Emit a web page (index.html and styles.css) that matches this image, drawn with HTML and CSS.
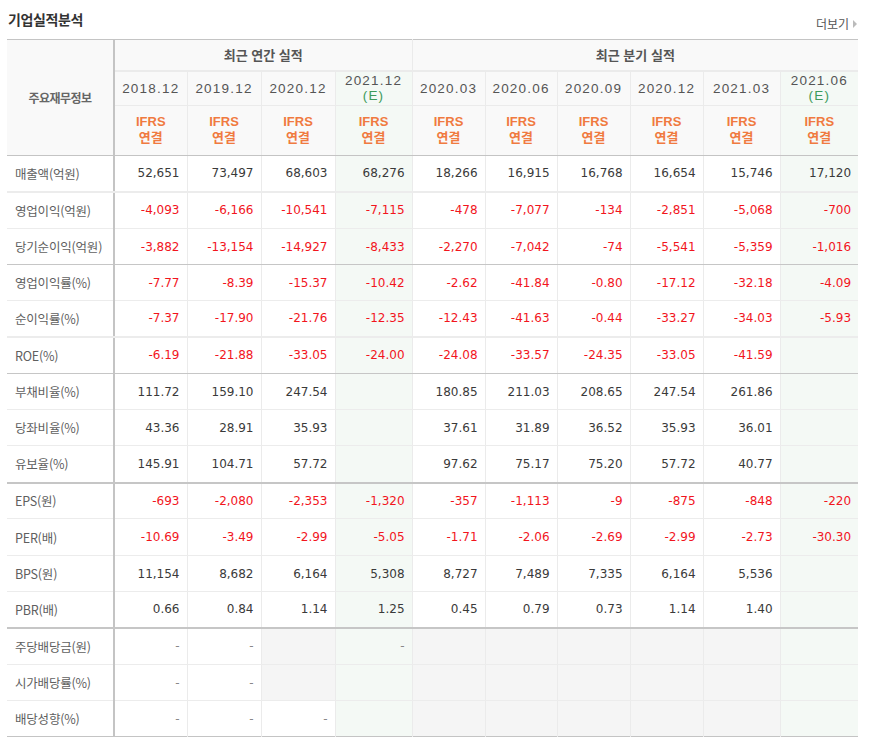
FILE: index.html
```html
<!DOCTYPE html>
<html lang="ko">
<head>
<meta charset="utf-8">
<title>기업실적분석</title>
<link rel="stylesheet" href="styles.css">
</head>
<body>
<div class="wrap">
  <div class="head">
    <h2 class="title">기업실적분석</h2>
    <a class="more" href="#">더보기<span class="arr"></span></a>
  </div>
  <table class="fin">
    <colgroup>
      <col class="c-lab"><col class="c73"><col class="c74"><col class="c74"><col class="c77">
      <col class="c73"><col class="c72"><col class="c73"><col class="c73"><col class="c77"><col class="c78">
    </colgroup>
    <thead>
      <tr class="r-grp">
        <th class="lab-h" rowspan="3">주요재무정보</th>
        <th class="grp" colspan="4">최근 연간 실적</th>
        <th class="grp sep" colspan="6">최근 분기 실적</th>
      </tr>
      <tr class="r-date">
        <th class="date">2018.12</th>
        <th class="date">2019.12</th>
        <th class="date">2020.12</th>
        <th class="date est">2021.12<br><em>(E)</em></th>
        <th class="date sep">2020.03</th>
        <th class="date">2020.06</th>
        <th class="date">2020.09</th>
        <th class="date">2020.12</th>
        <th class="date">2021.03</th>
        <th class="date est">2021.06<br><em>(E)</em></th>
      </tr>
      <tr class="r-ifrs">
        <th class="ifrs">IFRS<br>연결</th>
        <th class="ifrs">IFRS<br>연결</th>
        <th class="ifrs">IFRS<br>연결</th>
        <th class="ifrs est">IFRS<br>연결</th>
        <th class="ifrs sep">IFRS<br>연결</th>
        <th class="ifrs">IFRS<br>연결</th>
        <th class="ifrs">IFRS<br>연결</th>
        <th class="ifrs">IFRS<br>연결</th>
        <th class="ifrs">IFRS<br>연결</th>
        <th class="ifrs est">IFRS<br>연결</th>
      </tr>
    </thead>
    <tbody>
      <tr class="lite2">
        <td class="lab">매출액(억원)</td>
        <td class="n">52,651</td><td class="n">73,497</td><td class="n">68,603</td><td class="n est">68,276</td>
        <td class="n sep">18,266</td><td class="n">16,915</td><td class="n">16,768</td><td class="n">16,654</td><td class="n">15,746</td><td class="n est">17,120</td>
      </tr>
      <tr class="tall">
        <td class="lab">영업이익(억원)</td>
        <td class="n neg">-4,093</td><td class="n neg">-6,166</td><td class="n neg">-10,541</td><td class="n neg est">-7,115</td>
        <td class="n neg sep">-478</td><td class="n neg">-7,077</td><td class="n neg">-134</td><td class="n neg">-2,851</td><td class="n neg">-5,068</td><td class="n neg est">-700</td>
      </tr>
      <tr class="end">
        <td class="lab">당기순이익(억원)</td>
        <td class="n neg">-3,882</td><td class="n neg">-13,154</td><td class="n neg">-14,927</td><td class="n neg est">-8,433</td>
        <td class="n neg sep">-2,270</td><td class="n neg">-7,042</td><td class="n neg">-74</td><td class="n neg">-5,541</td><td class="n neg">-5,359</td><td class="n neg est">-1,016</td>
      </tr>
      <tr>
        <td class="lab">영업이익률(%)</td>
        <td class="n neg">-7.77</td><td class="n neg">-8.39</td><td class="n neg">-15.37</td><td class="n neg est">-10.42</td>
        <td class="n neg sep">-2.62</td><td class="n neg">-41.84</td><td class="n neg">-0.80</td><td class="n neg">-17.12</td><td class="n neg">-32.18</td><td class="n neg est">-4.09</td>
      </tr>
      <tr class="lite2">
        <td class="lab">순이익률(%)</td>
        <td class="n neg">-7.37</td><td class="n neg">-17.90</td><td class="n neg">-21.76</td><td class="n neg est">-12.35</td>
        <td class="n neg sep">-12.43</td><td class="n neg">-41.63</td><td class="n neg">-0.44</td><td class="n neg">-33.27</td><td class="n neg">-34.03</td><td class="n neg est">-5.93</td>
      </tr>
      <tr class="end tall">
        <td class="lab">ROE(%)</td>
        <td class="n neg">-6.19</td><td class="n neg">-21.88</td><td class="n neg">-33.05</td><td class="n neg est">-24.00</td>
        <td class="n neg sep">-24.08</td><td class="n neg">-33.57</td><td class="n neg">-24.35</td><td class="n neg">-33.05</td><td class="n neg">-41.59</td><td class="n est"></td>
      </tr>
      <tr>
        <td class="lab">부채비율(%)</td>
        <td class="n">111.72</td><td class="n">159.10</td><td class="n">247.54</td><td class="n est"></td>
        <td class="n sep">180.85</td><td class="n">211.03</td><td class="n">208.65</td><td class="n">247.54</td><td class="n">261.86</td><td class="n est"></td>
      </tr>
      <tr>
        <td class="lab">당좌비율(%)</td>
        <td class="n">43.36</td><td class="n">28.91</td><td class="n">35.93</td><td class="n est"></td>
        <td class="n sep">37.61</td><td class="n">31.89</td><td class="n">36.52</td><td class="n">35.93</td><td class="n">36.01</td><td class="n est"></td>
      </tr>
      <tr class="end2 tall">
        <td class="lab">유보율(%)</td>
        <td class="n">145.91</td><td class="n">104.71</td><td class="n">57.72</td><td class="n est"></td>
        <td class="n sep">97.62</td><td class="n">75.17</td><td class="n">75.20</td><td class="n">57.72</td><td class="n">40.77</td><td class="n est"></td>
      </tr>
      <tr>
        <td class="lab">EPS(원)</td>
        <td class="n neg">-693</td><td class="n neg">-2,080</td><td class="n neg">-2,353</td><td class="n neg est">-1,320</td>
        <td class="n neg sep">-357</td><td class="n neg">-1,113</td><td class="n neg">-9</td><td class="n neg">-875</td><td class="n neg">-848</td><td class="n neg est">-220</td>
      </tr>
      <tr class="tall">
        <td class="lab">PER(배)</td>
        <td class="n neg">-10.69</td><td class="n neg">-3.49</td><td class="n neg">-2.99</td><td class="n neg est">-5.05</td>
        <td class="n neg sep">-1.71</td><td class="n neg">-2.06</td><td class="n neg">-2.69</td><td class="n neg">-2.99</td><td class="n neg">-2.73</td><td class="n neg est">-30.30</td>
      </tr>
      <tr>
        <td class="lab">BPS(원)</td>
        <td class="n">11,154</td><td class="n">8,682</td><td class="n">6,164</td><td class="n est">5,308</td>
        <td class="n sep">8,727</td><td class="n">7,489</td><td class="n">7,335</td><td class="n">6,164</td><td class="n">5,536</td><td class="n est"></td>
      </tr>
      <tr class="end2">
        <td class="lab">PBR(배)</td>
        <td class="n">0.66</td><td class="n">0.84</td><td class="n">1.14</td><td class="n est">1.25</td>
        <td class="n sep">0.45</td><td class="n">0.79</td><td class="n">0.73</td><td class="n">1.14</td><td class="n">1.40</td><td class="n est"></td>
      </tr>
      <tr class="tall">
        <td class="lab">주당배당금(원)</td>
        <td class="n dash">-</td><td class="n dash">-</td><td class="n gray"></td><td class="n dash est">-</td>
        <td class="n gray sep"></td><td class="n gray"></td><td class="n gray"></td><td class="n gray"></td><td class="n gray"></td><td class="n est"></td>
      </tr>
      <tr>
        <td class="lab">시가배당률(%)</td>
        <td class="n dash">-</td><td class="n dash">-</td><td class="n gray"></td><td class="n est"></td>
        <td class="n gray sep"></td><td class="n gray"></td><td class="n gray"></td><td class="n gray"></td><td class="n gray"></td><td class="n est"></td>
      </tr>
      <tr>
        <td class="lab">배당성향(%)</td>
        <td class="n dash">-</td><td class="n dash">-</td><td class="n dash">-</td><td class="n est"></td>
        <td class="n gray sep"></td><td class="n gray"></td><td class="n gray"></td><td class="n gray"></td><td class="n gray"></td><td class="n est"></td>
      </tr>
    </tbody>
  </table>
</div>
</body>
</html>
```

FILE: styles.css
```css
html, body {
  margin: 0;
  padding: 0;
  background: #fff;
}
body {
  font-family: "Noto Sans CJK KR", "Noto Sans", sans-serif;
  color: #333;
}
.wrap {
  width: 851px;
  padding-left: 7px;
}
.head {
  height: 39px;
  display: flex;
  justify-content: space-between;
  align-items: flex-start;
}
.title {
  margin: 9px 0 0 1px;
  font-size: 14px;
  line-height: 20px;
  font-weight: bold;
  color: #333;
  letter-spacing: -0.4px;
}
.more {
  margin-top: 15px;
  margin-right: 1px;
  font-size: 12px;
  line-height: 17px;
  color: #555;
  text-decoration: none;
  display: flex;
  align-items: center;
}
.arr {
  display: inline-block;
  width: 0;
  height: 0;
  margin-left: 4px;
  border-top: 4px solid transparent;
  border-bottom: 4px solid transparent;
  border-left: 4px solid #bbb;
}
.fin {
  width: 851px;
  table-layout: fixed;
  border-collapse: collapse;
  border-top: 1px solid #c4c4c4;
  border-bottom: 1px solid #c4c4c4;
}
.c-lab { width: 107px; }
.c72 { width: 72px; }
.c73 { width: 73px; }
.c74 { width: 74px; }
.c77 { width: 77px; }
.c78 { width: 78px; }
.fin th, .fin td {
  padding: 0;
  border: 1px solid #ebebeb;
  border-top: 0;
}
.fin tr > :last-child { border-right: 0; }
.fin th {
  background: #f9f9f9;
  font-weight: normal;
}
.lab-h {
  font-size: 12px;
  font-weight: bold !important;
  color: #666;
  letter-spacing: -0.5px;
  border-left: 0 !important;
  border-right: 2px solid #c4c4c4 !important;
  border-bottom: 1px solid #c4c4c4 !important;
}
.r-grp { height: 31px; }
.grp {
  font-size: 13px;
  font-weight: bold !important;
  color: #555;
  border-left: 0;
  border-right: 0;
  border-bottom: 2px solid #ebebeb !important;
}
.r-date { height: 35px; }
.date {
  font-family: "Liberation Sans", Arial, sans-serif;
  font-size: 13.5px;
  line-height: 15px;
  letter-spacing: 1.2px;
  color: #555;
}
.date em {
  font-style: normal;
  color: #3c9a5b;
}
.r-ifrs { height: 50px; }
.ifrs {
  font-family: "Liberation Sans", "Noto Sans CJK KR", sans-serif;
  font-size: 13px;
  line-height: 16px;
  font-weight: bold !important;
  color: #f07a40;
  padding-bottom: 2px !important;
  border-bottom: 1px solid #c4c4c4 !important;
}
.fin tbody tr { height: 36px; }
.fin tbody tr.tall { height: 37px; }
.fin tbody td { border-bottom: 1px solid #ececec; }
.fin tbody tr.lite2 td { border-bottom: 2px solid #ececec; }
.fin tbody tr.end td { border-bottom: 1px solid #c6c6c6; }
.fin tbody tr.end2 td { border-bottom: 2px solid #c6c6c6; }
.fin tbody tr:last-child td { border-bottom: 0; }
.lab {
  text-align: left;
  padding-left: 8px !important;
  font-size: 12.5px;
  letter-spacing: -0.2px;
  color: #5f5f5f;
  white-space: nowrap;
  border-left: 0 !important;
  border-right: 2px solid #c4c4c4 !important;
}
.n {
  text-align: right;
  padding-right: 7px !important;
  font-family: "DejaVu Sans", Verdana, sans-serif;
  font-size: 12px;
  color: #3a3a3a;
}
.neg { color: #f2151d; }
.dash { color: #888; }
.est { background: #f4f9f5 !important; }
.gray { background: #f5f5f5; }
.sep { border-left: 1px solid #cccccc !important; }
```
